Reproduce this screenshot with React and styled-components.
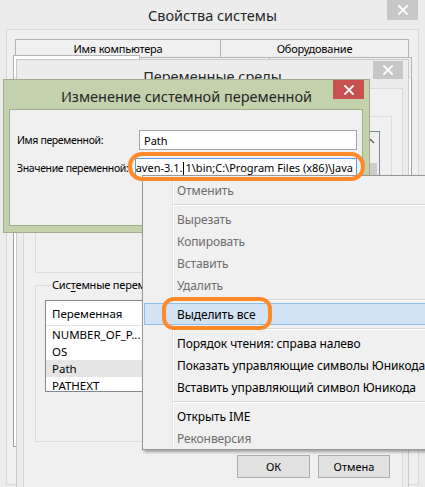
import styled, { createGlobalStyle } from "styled-components";

const GlobalStyle = createGlobalStyle`
  html, body {
    margin: 0;
    padding: 0;
  }
  body {
    width: 425px;
    height: 487px;
    overflow: hidden;
    background: #f0f0f0;
    font-family: "Noto Sans", "Open Sans", sans-serif;
    font-size: 11px;
    color: #000;
  }
`;

const Desktop = styled.div`
  position: relative;
  width: 425px;
  height: 487px;
  overflow: hidden;
`;

const Window = styled.div`
  position: absolute;
  left: ${({ $left }) => $left}px;
  top: ${({ $top }) => $top}px;
  width: ${({ $width }) => $width}px;
  height: ${({ $height }) => $height}px;
  box-sizing: border-box;
  display: flex;
  flex-direction: column;
  background: ${({ $frame }) => $frame};
  border: ${({ $border }) => ($border ? `1px solid ${$border}` : "none")};
`;

const TitleBar = styled.div`
  display: grid;
  grid-template-columns: 1fr auto 1fr;
  align-items: start;
  height: ${({ $height }) => $height}px;
  flex-shrink: 0;
`;

const Title = styled.div`
  grid-column: 2;
  padding-top: ${({ $pad }) => $pad}px;
  font-size: 14.5px;
  line-height: 20px;
  color: #262626;
  white-space: nowrap;
`;

const CloseButton = styled.div`
  grid-column: 3;
  justify-self: end;
  display: flex;
  align-items: center;
  justify-content: center;
  width: ${({ $w }) => $w}px;
  height: ${({ $h }) => $h}px;
  margin-right: ${({ $mr }) => $mr}px;
  margin-top: ${({ $mt }) => $mt}px;
  background: ${({ $color }) => $color};
`;

const Client = styled.div`
  flex: 1;
  display: flex;
  flex-direction: column;
  min-height: 0;
  background: #f0f0f0;
  border: 1px solid ${({ $border }) => $border};
  margin: ${({ $margin }) => $margin};
  padding: ${({ $padding }) => $padding};
`;

/* Свойства системы: tabs */
const TabRow = styled.div`
  display: flex;
  height: ${({ $height }) => $height}px;
  margin: ${({ $margin }) => $margin};
  flex-shrink: 0;
`;

const Tab = styled.div`
  width: ${({ $w }) => ($w ? `${$w}px` : "auto")};
  flex: ${({ $w }) => ($w ? "none" : 1)};
  box-sizing: border-box;
  display: flex;
  align-items: center;
  justify-content: center;
  letter-spacing: -0.2px;
  border: 1px solid #b4b4b4;
  border-bottom: none;
  margin-left: -1px;
  background: ${({ $active }) => ($active ? "#fff" : "#f0f0f0")};
  margin-top: ${({ $active }) => ($active ? "-2px" : "0")};
  &:first-child {
    margin-left: 0;
  }
`;

const TabPanel = styled.div`
  flex: 1;
  background: #fff;
  border: 1px solid #a0a0a0;
  border-top-color: #d9d9d9;
`;

/* Переменные среды */
const Group = styled.fieldset`
  margin: ${({ $mt }) => $mt || 0}px 0 0 0;
  padding: 7px 11px 0 9px;
  height: ${({ $height }) => $height}px;
  box-sizing: border-box;
  border: 1px solid #dcdcdc;
  min-width: 0;
  flex-shrink: 0;
`;

const Legend = styled.legend`
  margin-left: 6px;
  padding: 0 1px;
  line-height: 16px;
  letter-spacing: -0.2px;
  white-space: nowrap;
  u {
    text-decoration-thickness: 1px;
    text-underline-offset: 2px;
  }
`;

const ListBox = styled.div`
  height: ${({ $height }) => $height}px;
  box-sizing: border-box;
  background: #fff;
  border: 1px solid #828790;
  overflow: hidden;
  display: flex;
  font-size: 11.5px;
`;

const ListColumns = styled.div`
  flex: 1;
  min-width: 0;
`;

const ListHeader = styled.div`
  display: flex;
  height: 24px;
  border-bottom: 1px solid #e5e5e5;
`;

const HeaderCell = styled.div`
  width: ${({ $w }) => ($w ? `${$w}px` : "auto")};
  flex: ${({ $w }) => ($w ? "none" : 1)};
  display: flex;
  align-items: center;
  padding-left: 6px;
  box-sizing: border-box;
  border-right: 1px solid #e5e5e5;
`;

const ListRow = styled.div`
  display: flex;
  height: 17px;
  line-height: 17px;
  background: ${({ $selected }) => ($selected ? "#e5e5e5" : "transparent")};
`;

const Cell = styled.div`
  width: ${({ $w }) => ($w ? `${$w}px` : "auto")};
  flex: ${({ $w }) => ($w ? "none" : 1)};
  padding-left: 6px;
  box-sizing: border-box;
  white-space: nowrap;
  overflow: hidden;
`;

const ScrollBar = styled.div`
  width: 17px;
  flex-shrink: 0;
  display: flex;
  flex-direction: column;
  align-items: center;
  background: #f0f0f0;
`;

const ScrollArrow = styled.div`
  height: 17px;
  display: flex;
  align-items: center;
  justify-content: center;
`;

const ScrollThumb = styled.div`
  width: 13px;
  height: ${({ $h }) => $h}px;
  margin-top: ${({ $mt }) => $mt}px;
  background: #cdcdcd;
`;

const ButtonRow = styled.div`
  display: flex;
  justify-content: flex-end;
  gap: 8px;
  margin: 13px 2px 0 0;
`;

const Button = styled.div`
  width: ${({ $w }) => $w}px;
  height: 23px;
  box-sizing: border-box;
  display: flex;
  align-items: center;
  justify-content: center;
  background: #e1e1e1;
  border: 1px solid #adadad;
`;

/* Изменение системной переменной */
const FieldGrid = styled.div`
  display: grid;
  grid-template-columns: 122px 1fr;
  row-gap: 8px;
  align-items: center;
`;

const FieldLabel = styled.div`
  white-space: nowrap;
  font-size: 10.5px;
  letter-spacing: -0.35px;
`;

const TextBox = styled.div`
  height: 20px;
  box-sizing: border-box;
  background: #fff;
  border: 1px solid ${({ $focused }) => ($focused ? "#5c9fe2" : "#a5a5a5")};
  margin-left: ${({ $focused }) => ($focused ? "-4px" : "0")};
  display: flex;
  align-items: center;
  justify-content: ${({ $focused }) => ($focused ? "flex-end" : "flex-start")};
  padding: 0 3px 0 4px;
  overflow: hidden;
  white-space: nowrap;
  font-size: 11px;
`;

const Caret = styled.span`
  display: inline-block;
  width: 1px;
  height: 14px;
  margin: 0 1px;
  background: #000;
  vertical-align: middle;
`;

/* Context menu */
const Menu = styled.div`
  position: absolute;
  left: 142px;
  top: 175px;
  width: 300px;
  box-sizing: border-box;
  padding: 3px 1px 0 1px;
  font-size: 12px;
  letter-spacing: -0.1px;
  background:
    linear-gradient(to right, transparent 29px, #e2e3e3 29px, #e2e3e3 30px, #fff 30px, #fff 31px, transparent 31px),
    #f0f0f0;
  border: 1px solid #979797;
  box-shadow: 2px 2px 3px rgba(0, 0, 0, 0.35);
`;

const MenuItem = styled.div`
  height: 22px;
  box-sizing: border-box;
  display: flex;
  align-items: center;
  padding-left: ${({ $active }) => ($active ? "32px" : "33px")};
  color: ${({ $disabled }) => ($disabled ? "#6d6d6d" : "#000")};
  background: ${({ $active }) => ($active ? "#d1e3f4" : "transparent")};
  border: ${({ $active }) => ($active ? "1px solid #8fbfe9" : "none")};
  white-space: nowrap;
`;

const MenuSeparator = styled.div`
  margin: 3px 0 2px 29px;
  border-top: 1px solid #d7d7d7;
  border-bottom: 1px solid #fff;
`;

/* Hand-drawn annotation rings */
const Ring = styled.div`
  position: absolute;
  left: ${({ $left }) => $left}px;
  top: ${({ $top }) => $top}px;
  width: ${({ $width }) => $width}px;
  height: ${({ $height }) => $height}px;
  box-sizing: border-box;
  border: 4px solid #ff8a2a;
  border-radius: ${({ $radius }) => $radius}px;
  pointer-events: none;
`;

function CloseIcon() {
  return (
    <svg width="10" height="10" viewBox="0 0 10 10">
      <path d="M1 1 L9 9 M9 1 L1 9" stroke="#fff" strokeWidth="1.8" strokeLinecap="square" />
    </svg>
  );
}

function UpArrow() {
  return (
    <svg width="9" height="6" viewBox="0 0 9 6">
      <path d="M1 5 L4.5 1.5 L8 5" stroke="#606060" strokeWidth="1.4" fill="none" />
    </svg>
  );
}

const menuItems = [
  { label: "Отменить", disabled: true },
  "sep",
  { label: "Вырезать", disabled: true },
  { label: "Копировать", disabled: true },
  { label: "Вставить", disabled: true },
  { label: "Удалить", disabled: true },
  "sep",
  { label: "Выделить все", active: true },
  "sep",
  { label: "Порядок чтения: справа налево" },
  { label: "Показать управляющие символы Юникода" },
  { label: "Вставить управляющий символ Юникода" },
  "sep",
  { label: "Открыть IME" },
  { label: "Реконверсия", disabled: true },
];

const systemVars = [
  { name: "NUMBER_OF_P...", value: "4" },
  { name: "OS", value: "Windows_NT" },
  { name: "Path", value: "C:\\Program Files\\Java\\jdk1.7.0_45\\bin;...", selected: true },
  { name: "PATHEXT", value: ".COM;.EXE;.BAT;.CMD;.VBS;.VBE;.JS;..." },
];

const userVars = [
  { name: "TEMP", value: "%USERPROFILE%\\AppData\\Local\\Temp" },
  { name: "TMP", value: "%USERPROFILE%\\AppData\\Local\\Temp" },
];

export default function App() {
  return (
    <>
      <GlobalStyle />
      <Desktop>
        <Window $left={0} $top={0} $width={425} $height={487} $frame="#ececec">
          <TitleBar $height={29}>
            <Title $pad={5}>Свойства системы</Title>
            <CloseButton $w={31} $h={20} $mr={7} $mt={0} $color="#c7c7c7">
              <CloseIcon />
            </CloseButton>
          </TitleBar>
          <Client $border="#d9d9d9" $margin="0 6px 2px 6px" $padding="9px 6px 37px 6px">
            <TabRow $height={18} $margin="0 3px 0 2px">
              <Tab $w={206}>Имя компьютера</Tab>
              <Tab>Оборудование</Tab>
            </TabRow>
            <TabRow $height={20} $margin="0">
              <Tab $w={127} $active>Дополнительно</Tab>
              <Tab $w={131}>Защита системы</Tab>
              <Tab>Удаленный доступ</Tab>
            </TabRow>
            <TabPanel />
          </Client>
        </Window>

        <Window $left={16} $top={59} $width={393} $height={440} $frame="#ececec" $border="#cacaca">
          <TitleBar $height={28}>
            <Title $pad={6}>Переменные среды</Title>
            <CloseButton $w={30} $h={18} $mr={5} $mt={1} $color="#c7c7c7">
              <CloseIcon />
            </CloseButton>
          </TitleBar>
          <Client $border="#dadada" $margin="0 5px 0 6px" $padding="19px 10px 0 11px">
            <Group $height={165}>
              <Legend>Переменные среды пользователя для User</Legend>
              <ListBox $height={86}>
                <ListColumns>
                  <ListHeader>
                    <HeaderCell $w={100}>Переменная</HeaderCell>
                    <HeaderCell>Значение</HeaderCell>
                  </ListHeader>
                  {userVars.map((v) => (
                    <ListRow key={v.name}>
                      <Cell $w={100}>{v.name}</Cell>
                      <Cell>{v.value}</Cell>
                    </ListRow>
                  ))}
                </ListColumns>
                <ScrollBar>
                  <ScrollArrow>
                    <UpArrow />
                  </ScrollArrow>
                  <ScrollThumb $h={40} $mt={14} />
                </ScrollBar>
              </ListBox>
            </Group>
            <Group $height={165} $mt={4}>
              <Legend>
                Сис<u>т</u>емные переменные
              </Legend>
              <ListBox $height={92}>
                <ListColumns>
                  <ListHeader>
                    <HeaderCell $w={100}>Переменная</HeaderCell>
                    <HeaderCell>Значение</HeaderCell>
                  </ListHeader>
                  {systemVars.map((v) => (
                    <ListRow key={v.name} $selected={v.selected}>
                      <Cell $w={100}>{v.name}</Cell>
                      <Cell>{v.value}</Cell>
                    </ListRow>
                  ))}
                </ListColumns>
              </ListBox>
            </Group>
            <ButtonRow>
              <Button $w={73}>ОК</Button>
              <Button $w={72}>Отмена</Button>
            </ButtonRow>
          </Client>
        </Window>

        <Window $left={3} $top={79} $width={367} $height={154} $frame="#c3d2ad" $border="#9fae8b">
          <TitleBar $height={29}>
            <Title $pad={6}>Изменение системной переменной</Title>
            <CloseButton $w={31} $h={19} $mr={5} $mt={0} $color="#c75050">
              <CloseIcon />
            </CloseButton>
          </TitleBar>
          <Client $border="#9fae8b" $margin="0 6px 6px 5px" $padding="20px 5px 0 7px">
            <FieldGrid>
              <FieldLabel>Имя переменной:</FieldLabel>
              <TextBox>Path</TextBox>
              <FieldLabel>Значение переменной:</FieldLabel>
              <TextBox $focused>
                <span>
                  C:\Program Files\apache-maven-3.1.
                  <Caret />
                  1\bin;C:\Program Files (x86)\Java
                </span>
              </TextBox>
            </FieldGrid>
          </Client>
        </Window>

        <Menu>
          {menuItems.map((item, i) =>
            item === "sep" ? (
              <MenuSeparator key={i} />
            ) : (
              <MenuItem key={i} $disabled={item.disabled} $active={item.active}>
                {item.label}
              </MenuItem>
            )
          )}
        </Menu>

        <Ring $left={128} $top={152} $width={237} $height={29} $radius={14} />
        <Ring $left={162} $top={297} $width={110} $height={33} $radius={12} />
      </Desktop>
    </>
  );
}
